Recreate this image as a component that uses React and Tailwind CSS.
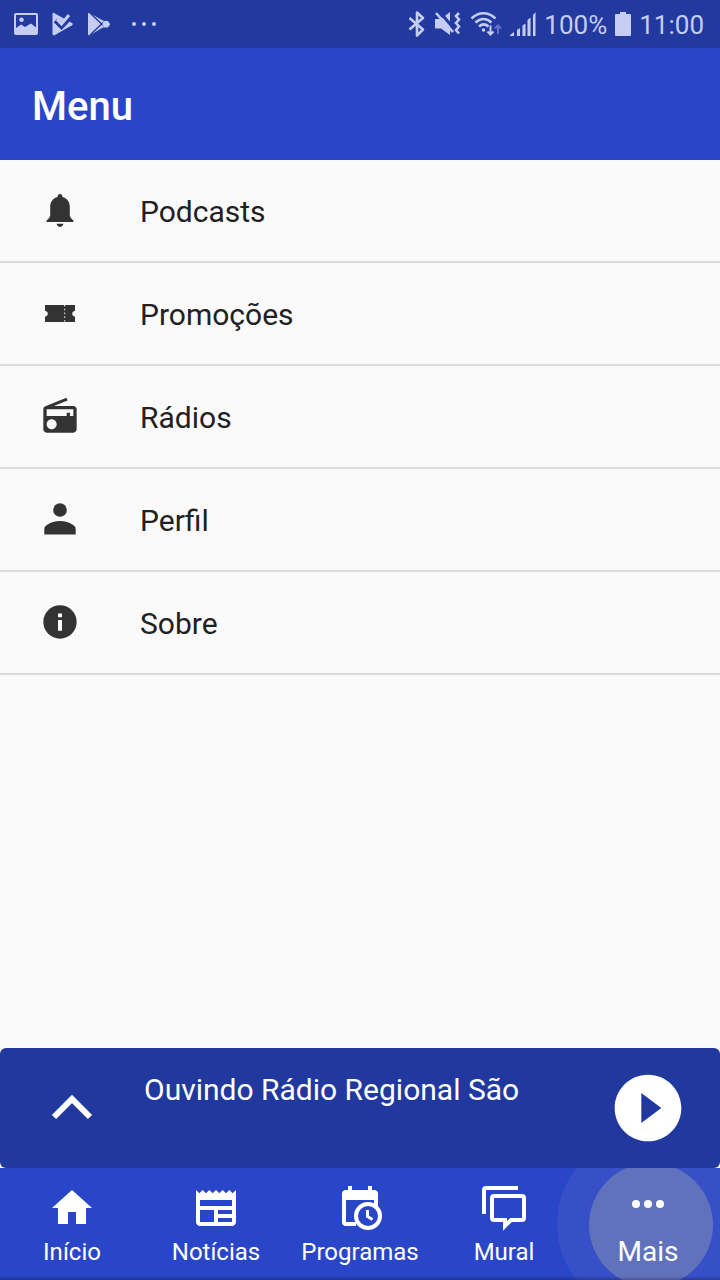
const BellIcon = () => (
  <svg viewBox="0 0 40 40" className="size-10" fill="currentColor" aria-hidden="true">
    <path d="M20 4c1.500 0 2.400 1 2.400 2.300v.7c4.500 1.100 7.400 4.900 7.400 9.500v8.500c0 1.800 1.200 3.500 3.700 5.400v1.600H6.500v-1.600c2.500-1.900 3.700-3.600 3.700-5.400v-8.500c0-4.600 2.900-8.400 7.400-9.500v-.7C17.600 5 18.500 4 20 4zM16.500 33.800h7c-.5 2-1.800 3.200-3.500 3.200s-3-1.200-3.500-3.200z" />
  </svg>
);

const TicketIcon = () => (
  <svg viewBox="0 0 40 40" className="size-10" aria-hidden="true">
    <path
      fill="currentColor"
      d="M5 12h30v6a2.700 2.700 0 0 0 0 5.400V29H5v-5.600A2.700 2.700 0 0 0 5 18z"
    />
    <path d="M24.700 12v17" stroke="#fafafa" strokeWidth="1" strokeDasharray="1.500 2.300" />
  </svg>
);

const RadioIcon = () => (
  <svg viewBox="0 0 24 24" className="size-10" fill="currentColor" aria-hidden="true">
    <path d="M3.240 6.150C2.510 6.430 2 7.170 2 8v12c0 1.100.890 2 2 2h16c1.110 0 2-.9 2-2V8c0-1.110-.890-2-2-2H8.300l8.260-3.340L15.880 1 3.240 6.150zM7 20c-1.660 0-3-1.340-3-3s1.340-3 3-3 3 1.340 3 3-1.340 3-3 3zm13-8h-2v-2h-2v2H4V8h16v4z" />
  </svg>
);

const PersonIcon = () => (
  <svg viewBox="0 0 40 40" className="size-10" fill="currentColor" aria-hidden="true">
    <circle cx="20" cy="11" r="6.800" />
    <path d="M4.300 35.500v-5.200c0-2.200 1.200-3.700 3.400-4.900 3-1.800 7.300-3.300 12.300-3.300s9.300 1.500 12.300 3.300c2.200 1.200 3.400 2.700 3.400 4.900v5.200z" />
  </svg>
);

const InfoIcon = () => (
  <svg viewBox="0 0 24 24" className="size-10" fill="currentColor" aria-hidden="true">
    <path d="M12 2C6.480 2 2 6.480 2 12s4.480 10 10 10 10-4.480 10-10S17.520 2 12 2zm1.200 15.200h-2.400v-6.400h2.400v6.400zm0-8h-2.400V6.900h2.400v2.300z" />
  </svg>
);

const HomeIcon = () => (
  <svg viewBox="0 0 24 24" className="size-12" fill="currentColor" aria-hidden="true">
    <path d="M10 20v-6h4v6h5v-8h3L12 3 2 12h3v8z" />
  </svg>
);

const NewsIcon = () => (
  <svg viewBox="0 0 24 24" className="size-12" fill="currentColor" aria-hidden="true">
    <path d="M22 3l-1.670 1.670L18.670 3 17 4.670 15.330 3l-1.660 1.670L12 3l-1.670 1.670L8.670 3 7 4.670 5.330 3 3.670 4.670 2 3v16c0 1.100.9 2 2 2h16c1.100 0 2-.9 2-2V3zM11 19H4v-6h7v6zm9 0h-7v-2h7v2zm0-4h-7v-2h7v2zm0-4H4V8h16v3z" />
  </svg>
);

const ScheduleIcon = () => (
  <svg viewBox="0 0 48 48" className="size-12" fill="none" stroke="currentColor" aria-hidden="true">
    <path d="M20 40H10a2 2 0 0 1-2-2V10a2 2 0 0 1 2-2h28a2 2 0 0 1 2 2v12" strokeWidth="4" />
    <path d="M8 8h32v8H8zM12 2h4v6h-4zM32 2h4v6h-4z" fill="currentColor" stroke="none" />
    <circle cx="32" cy="32" r="12" fill="#2946c8" strokeWidth="4" />
    <path d="M31.500 26v6.500l5 3" strokeWidth="3" />
  </svg>
);

const ChatIcon = () => (
  <svg viewBox="0 0 48 48" className="size-12" fill="none" stroke="currentColor" strokeWidth="4" aria-hidden="true">
    <path d="M4 30V6a2 2 0 0 1 2-2h32" />
    <path d="M14 12h28a2 2 0 0 1 2 2v20a2 2 0 0 1-2 2H31l-6 6v-6H14a2 2 0 0 1-2-2V14a2 2 0 0 1 2-2z" />
  </svg>
);

const MoreIcon = () => (
  <svg viewBox="0 0 48 48" className="size-12" fill="currentColor" aria-hidden="true">
    <circle cx="12" cy="24" r="4" />
    <circle cx="24" cy="24" r="4" />
    <circle cx="36" cy="24" r="4" />
  </svg>
);

function StatusBar() {
  return (
    <div className="flex h-12 items-center justify-between bg-[#2239a0] pr-4 pl-3.5 text-[#c5cdf3]">
      <div className="flex items-center gap-3.5">
        <svg viewBox="0 0 24 24" className="size-6" aria-hidden="true">
          <path
            fill="currentColor"
            fillRule="evenodd"
            d="M2 1h20a2 2 0 0 1 2 2v18a2 2 0 0 1-2 2H2a2 2 0 0 1-2-2V3a2 2 0 0 1 2-2zm0 2v13l5-3.500 4 2.500 6-3.500 5 4V3zM7.500 5.500a2.300 2.300 0 1 1 0 4.600 2.300 2.300 0 0 1 0-4.600z"
          />
        </svg>
        <svg viewBox="0 0 22 24" className="h-6 w-[22px]" aria-hidden="true">
          <path fill="currentColor" d="M2 1l9 5 9 5c1 .6 1 1.500 0 2.200L2.500 23.200C1.500 23.500.500 23 .500 22V2c0-.9.600-1.400 1.500-1z" />
          <path d="M3.500 8.500L9.500 14.500 19.500 4" fill="none" stroke="#2239a0" strokeWidth="5" />
          <path d="M5 7.500l4.500 4.500L17 3" fill="none" stroke="currentColor" strokeWidth="3" />
        </svg>
        <svg viewBox="0 0 22 24" className="h-6 w-[22px]" aria-hidden="true">
          <path fill="currentColor" d="M1.500 1L14 8 22 11.500v1.500L14 16 2 23.200C1 23.500 0 23 0 22V2c0-.7.500-1.300 1.500-1z" />
          <path d="M2 1l18 17M2 23L20 6" stroke="#2239a0" strokeWidth="1.400" />
          <circle cx="18" cy="12.200" r="3.400" fill="currentColor" />
        </svg>
        <svg viewBox="0 0 40 24" className="h-6 w-10" fill="currentColor" aria-hidden="true">
          <circle cx="10" cy="12" r="2" />
          <circle cx="20" cy="12" r="2" />
          <circle cx="30" cy="12" r="2" />
        </svg>
      </div>
      <div className="flex items-center gap-2">
        <svg viewBox="0 0 18 28" className="h-7 w-[18px]" fill="none" stroke="currentColor" strokeWidth="2.600" aria-hidden="true">
          <path d="M1.500 8L15 19.500 9 25.500v-23L15 8 1.500 19.500" strokeLinejoin="round" />
        </svg>
        <svg viewBox="0 0 28 28" className="size-7" fill="none" stroke="currentColor" aria-hidden="true">
          <path d="M1 9h6l9-7v23l-9-6.500H1z" fill="currentColor" stroke="none" />
          <path d="M5 1l16 19" stroke="#2239a0" strokeWidth="3" />
          <path d="M2 3l17 19" strokeWidth="2.600" />
          <path d="M25 3l-3 3 3 3.500-3 3.500 3 3.500-3 3.500 3 3.500" strokeWidth="2.600" />
        </svg>
        <svg viewBox="0 0 32 28" className="h-7 w-8" fill="none" stroke="currentColor" aria-hidden="true">
          <path d="M1.500 8.500c7-7 17-7 24 0M5.500 12.500c5-4.600 11-4.600 16 0M9 16.500c3-2.600 6.500-2.600 9.500 0" strokeWidth="2.600" />
          <circle cx="13.500" cy="20" r="1.800" fill="currentColor" stroke="none" />
          <path d="M20.500 15.500v9M17.500 21.500l3 3 3-3" strokeWidth="2" />
          <path d="M28 24v-8M25 18.500l3-3 3 3" strokeWidth="2" opacity=".4" />
        </svg>
        <div className="flex items-center gap-2">
          <svg viewBox="0 0 26 28" className="h-7 w-[26px]" fill="currentColor" aria-hidden="true">
            <path d="M0 26v-1l4-3v4zM7 26v-6l3-2v8zM12.500 26V15.500l3-2V26zM17.500 26V10l3-2.500V26zM23 26V5l2.500-3v24z" />
          </svg>
          <span className="pt-0.5 text-[26px] leading-8">100%</span>
        </div>
        <svg viewBox="0 0 16 24" className="h-6 w-4" fill="currentColor" aria-hidden="true">
          <path d="M5 0h6v2h4a1 1 0 0 1 1 1v20a1 1 0 0 1-1 1H1a1 1 0 0 1-1-1V3a1 1 0 0 1 1-1h4z" />
        </svg>
        <span className="pt-0.5 text-[26px] leading-8">11:00</span>
      </div>
    </div>
  );
}

const menuItems = [
  { label: "Podcasts", href: "#podcasts", Icon: BellIcon },
  { label: "Promoções", href: "#promocoes", Icon: TicketIcon },
  { label: "Rádios", href: "#radios", Icon: RadioIcon },
  { label: "Perfil", href: "#perfil", Icon: PersonIcon },
  { label: "Sobre", href: "#sobre", Icon: InfoIcon },
];

const tabs = [
  { label: "Início", href: "#inicio", Icon: HomeIcon },
  { label: "Notícias", href: "#noticias", Icon: NewsIcon },
  { label: "Programas", href: "#programas", Icon: ScheduleIcon },
  { label: "Mural", href: "#mural", Icon: ChatIcon },
];

export default function App() {
  return (
    <div className="flex min-h-screen flex-col bg-[#fafafa] font-['Roboto',sans-serif] text-[#212121]">
      <StatusBar />
      <header className="flex h-28 items-center bg-[#2946c8] px-8 pt-1.5">
        <h1 className="text-[40px] leading-12 font-medium text-white">Menu</h1>
      </header>

      <main className="grow">
        <ul>
          {menuItems.map(({ label, href, Icon }) => (
            <li key={label} className="border-b-2 border-[#dcdcdc]">
              <a href={href} className="flex h-[101px] items-center gap-15 px-10">
                <span className="pb-0.5 text-[#333333]">
                  <Icon />
                </span>
                <span className="pt-0.5 text-[30px] leading-9">{label}</span>
              </a>
            </li>
          ))}
        </ul>
      </main>

      <section className="flex h-30 items-center rounded-md bg-[#21399f] text-white">
        <button type="button" aria-label="Expandir" className="flex w-1/5 justify-center">
          <svg viewBox="0 0 48 48" className="size-12" fill="none" stroke="currentColor" strokeWidth="6" aria-hidden="true">
            <path d="M6 33L24 15 42 33" />
          </svg>
        </button>
        <p className="grow self-start pt-6 text-[30px] leading-9">Ouvindo Rádio Regional São</p>
        <button type="button" aria-label="Tocar" className="flex w-1/5 justify-center">
          <svg viewBox="0 0 24 24" className="size-20" fill="currentColor" aria-hidden="true">
            <path d="M12 2C6.480 2 2 6.480 2 12s4.480 10 10 10 10-4.480 10-10S17.520 2 12 2zm-2 14.500v-9l6 4.500-6 4.500z" />
          </svg>
        </button>
      </section>

      <nav className="relative grid h-28 grid-cols-5 overflow-hidden bg-[#2946c8] text-white after:pointer-events-none after:absolute after:inset-x-0 after:bottom-0 after:h-1 after:bg-linear-to-t after:from-black/25 after:to-transparent">
        {tabs.map(({ label, href, Icon }) => (
          <a key={label} href={href} className="flex flex-col items-center gap-1 pt-4">
            <Icon />
            <span className="text-2xl leading-8">{label}</span>
          </a>
        ))}
        <a href="#mais" aria-current="page" className="relative flex flex-col items-center pt-3">
          <span className="absolute top-1/2 left-1/2 size-[182px] -translate-1/2 rounded-full bg-[#374fc7]" />
          <span className="absolute top-[51%] left-[52%] size-31 -translate-1/2 rounded-full bg-[#6172bd]" />
          <span className="relative flex flex-col items-center gap-1">
            <MoreIcon />
            <span className="text-[28px] leading-10">Mais</span>
          </span>
        </a>
      </nav>
    </div>
  );
}
